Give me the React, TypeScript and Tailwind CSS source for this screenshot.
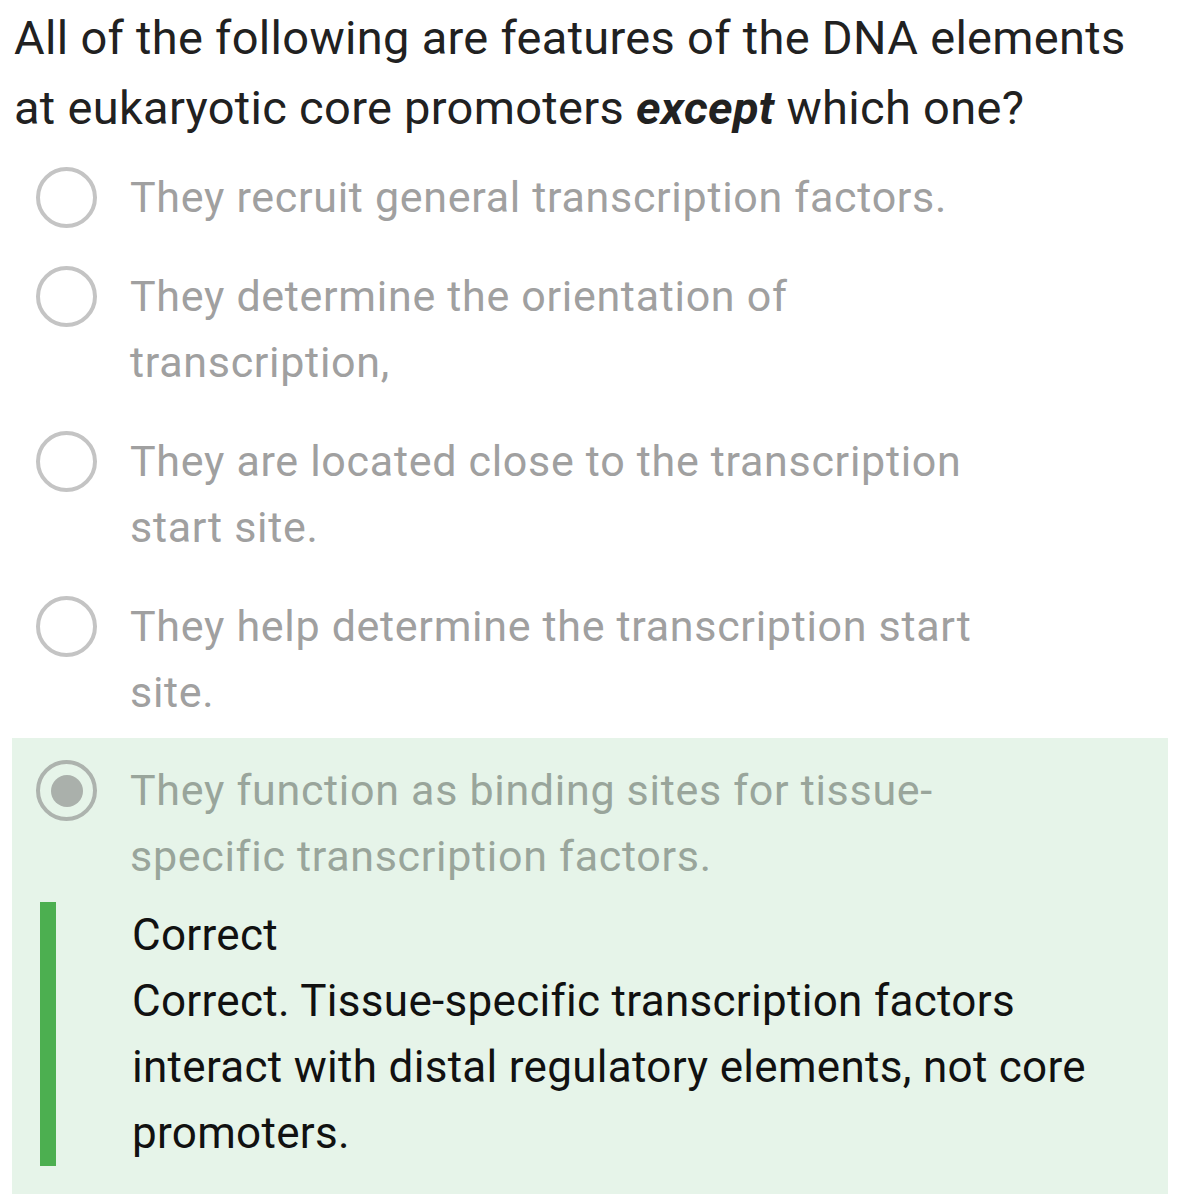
const options = [
  "They recruit general transcription factors.",
  "They determine the orientation of transcription,",
  "They are located close to the transcription start site.",
  "They help determine the transcription start site.",
];

function Radio({ checked }: { checked?: boolean }) {
  return (
    <span
      className={`mt-[3px] flex h-[61px] w-[61px] shrink-0 items-center justify-center rounded-full border-[4px] ${
        checked ? "border-[#adb3ae]" : "border-[#c4c4c4]"
      }`}
    >
      {checked && <span className="h-[32px] w-[32px] rounded-full bg-[#aab0ab]" />}
    </span>
  );
}

export default function App() {
  return (
    <div className="min-h-[1200px] bg-white font-['Roboto',sans-serif]">
      <h1 className="max-w-[1154px] pl-[14px] pt-[3px] text-[47px] leading-[70px] tracking-[0.3px] text-[#212121]">
        All of the following are features of the DNA elements at eukaryotic core promoters{" "}
        <em className="font-bold">except</em> which one?
      </h1>

      <ul className="mt-[21px]">
        {options.map((o) => (
          <li key={o} className="mb-[33px] flex items-start gap-[33px] pl-[36px]">
            <Radio />
            <span className="max-w-[870px] text-[43px] leading-[66px] tracking-[0.7px] text-[#a0a0a0]">{o}</span>
          </li>
        ))}
      </ul>

      <div className="mx-[12px] -mt-[20px] w-[1156px] bg-[#e6f4e9] pb-[28px] pt-[19px]">
        <div className="flex items-start gap-[33px] pl-[24px]">
          <Radio checked />
          <span className="max-w-[870px] text-[43px] leading-[66px] tracking-[0.7px] text-[#99a59b]">
            They function as binding sites for tissue-specific transcription factors.
          </span>
        </div>
        <div className="mt-[13px] flex gap-[76px] pl-[28px]">
          <span className="w-[16px] shrink-0 bg-[#4caf50]" />
          <div className="max-w-[1000px] text-[44px] leading-[66px] tracking-[0.3px] text-[#111]">
            <p>Correct</p>
            <p>
              Correct. Tissue-specific transcription factors interact with distal regulatory elements, not core promoters.
            </p>
          </div>
        </div>
      </div>
    </div>
  );
}
